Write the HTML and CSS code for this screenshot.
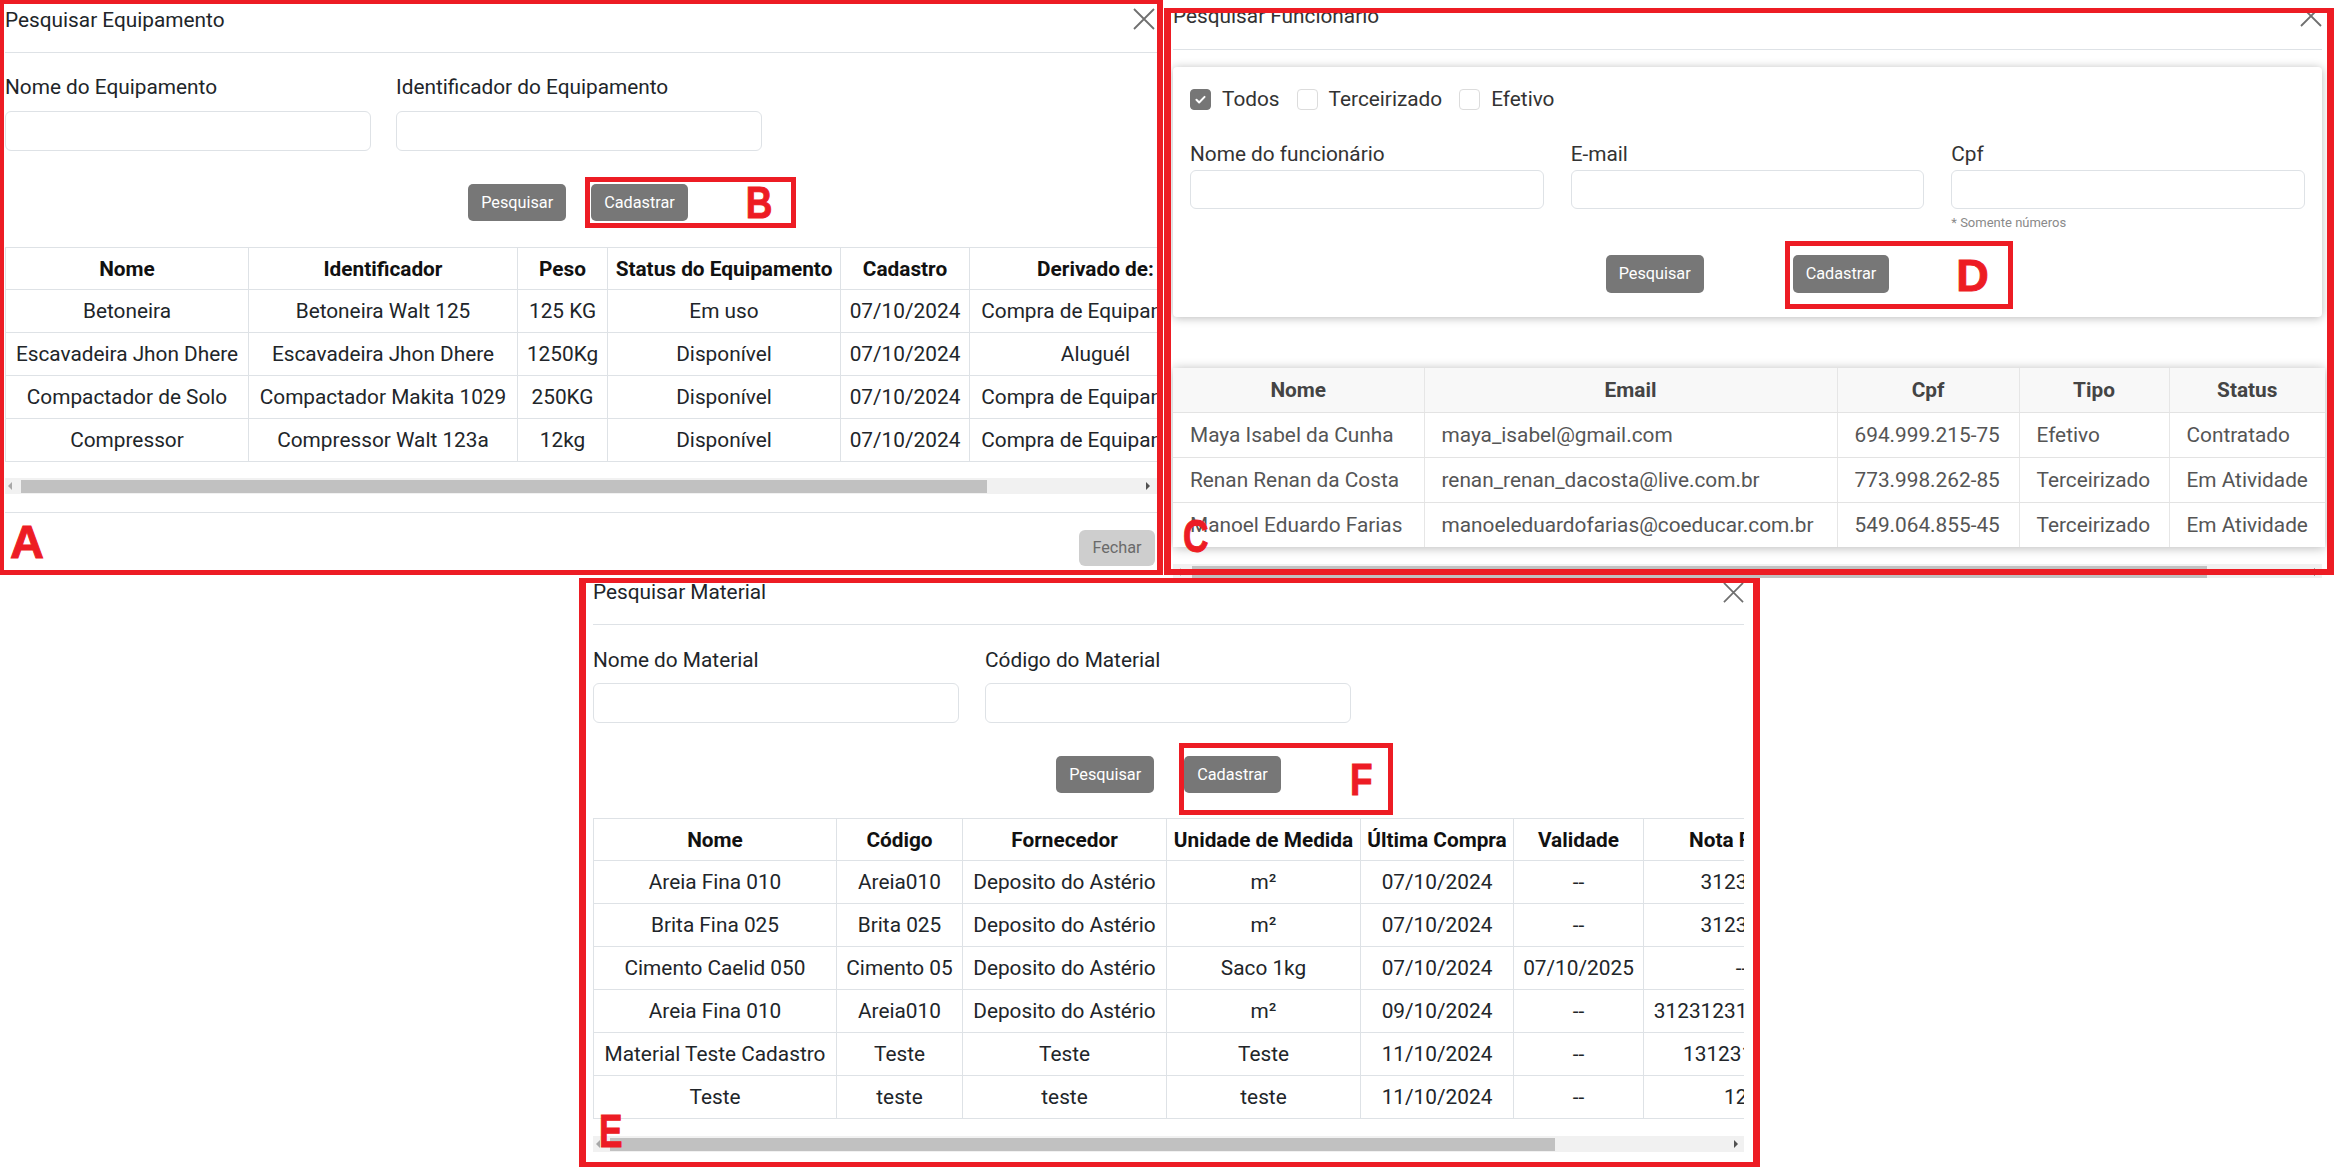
FILE: index.html
```html
<!DOCTYPE html>
<html lang="pt-BR">
<head>
<meta charset="utf-8">
<title>Pesquisas</title>
<link rel="stylesheet" href="styles.css">
</head>
<body>
<div class="collage">
  <div class="row-top">
    <section class="panel panel-a">
      <div class="modal modal-a">
        <header class="m-head m-head-a">
          <h1 class="m-title">Pesquisar Equipamento</h1>
          <svg class="x" viewBox="0 0 22 22"><path d="M1 1L21 21M21 1L1 21"/></svg>
        </header>
        <div class="fields fields-a">
          <div class="field"><label>Nome do Equipamento</label><div class="input"></div></div>
          <div class="field"><label>Identificador do Equipamento</label><div class="input"></div></div>
        </div>
        <div class="actions actions-a">
          <button class="btn">Pesquisar</button>
          <span class="mark"><button class="btn">Cadastrar</button><span class="mark-box mark-b"><span class="mark-letter narrow">B</span></span></span>
        </div>
        <div class="tbl-wrap tbl-wrap-a">
          <table class="tbl tbl-a">
            <colgroup><col class="a1"><col class="a2"><col class="a3"><col class="a4"><col class="a5"><col class="a6"></colgroup>
            <thead><tr><th>Nome</th><th>Identificador</th><th>Peso</th><th>Status do Equipamento</th><th>Cadastro</th><th>Derivado de:</th></tr></thead>
            <tbody>
              <tr><td>Betoneira</td><td>Betoneira Walt 125</td><td>125 KG</td><td>Em uso</td><td>07/10/2024</td><td>Compra de Equipamento</td></tr>
              <tr><td>Escavadeira Jhon Dhere</td><td>Escavadeira Jhon Dhere</td><td>1250Kg</td><td>Disponível</td><td>07/10/2024</td><td>Aluguél</td></tr>
              <tr><td>Compactador de Solo</td><td>Compactador Makita 1029</td><td>250KG</td><td>Disponível</td><td>07/10/2024</td><td>Compra de Equipamento</td></tr>
              <tr><td>Compressor</td><td>Compressor Walt 123a</td><td>12kg</td><td>Disponível</td><td>07/10/2024</td><td>Compra de Equipamento</td></tr>
            </tbody>
          </table>
        </div>
        <div class="hscroll hscroll-a"><span class="arr arr-l"></span><span class="thumb"></span><span class="arr arr-r"></span></div>
        <footer class="m-foot"><button class="btn btn-light">Fechar</button></footer>
      </div>
      <span class="tag tag-a">A</span>
    </section>

    <section class="panel panel-c">
      <div class="modal modal-c">
        <header class="m-head m-head-c">
          <h1 class="m-title">Pesquisar Funcionário</h1>
          <svg class="x" viewBox="0 0 22 22"><path d="M1 1L21 21M21 1L1 21"/></svg>
        </header>
        <div class="card filter-card">
          <div class="checks">
            <span class="check-item"><span class="chk chk-on"><svg viewBox="0 0 21 21"><path d="M6 10.8l3 3 6-6.2"/></svg></span>Todos</span>
            <span class="check-item"><span class="chk"></span>Terceirizado</span>
            <span class="check-item"><span class="chk"></span>Efetivo</span>
          </div>
          <div class="fields fields-c">
            <div class="field"><label>Nome do funcionário</label><div class="input"></div></div>
            <div class="field"><label>E-mail</label><div class="input"></div></div>
            <div class="field"><label>Cpf</label><div class="input"></div><p class="hint">* Somente números</p></div>
          </div>
          <div class="actions actions-c">
            <button class="btn">Pesquisar</button>
            <span class="mark"><button class="btn">Cadastrar</button><span class="mark-box mark-d"><span class="mark-letter">D</span></span></span>
          </div>
        </div>
        <div class="card table-card">
          <table class="tbl-c">
            <colgroup><col class="c1"><col class="c2"><col class="c3"><col class="c4"><col class="c5"></colgroup>
            <thead><tr><th>Nome</th><th>Email</th><th>Cpf</th><th>Tipo</th><th>Status</th></tr></thead>
            <tbody>
              <tr><td>Maya Isabel da Cunha</td><td>maya_isabel@gmail.com</td><td>694.999.215-75</td><td>Efetivo</td><td>Contratado</td></tr>
              <tr><td>Renan Renan da Costa</td><td>renan_renan_dacosta@live.com.br</td><td>773.998.262-85</td><td>Terceirizado</td><td>Em Atividade</td></tr>
              <tr><td>Manoel Eduardo Farias</td><td>manoeleduardofarias@coeducar.com.br</td><td>549.064.855-45</td><td>Terceirizado</td><td>Em Atividade</td></tr>
            </tbody>
          </table>
        </div>
        <div class="hscroll hscroll-c"><span class="arr arr-l"></span><span class="thumb"></span><span class="arr arr-r"></span></div>
      </div>
      <span class="tag tag-c narrow">C</span>
    </section>
  </div>

  <div class="row-bottom">
    <section class="panel panel-e">
      <div class="modal modal-e">
        <header class="m-head m-head-e">
          <h1 class="m-title">Pesquisar Material</h1>
          <svg class="x" viewBox="0 0 22 22"><path d="M1 1L21 21M21 1L1 21"/></svg>
        </header>
        <div class="fields fields-e">
          <div class="field"><label>Nome do Material</label><div class="input"></div></div>
          <div class="field"><label>Código do Material</label><div class="input"></div></div>
        </div>
        <div class="actions actions-e">
          <button class="btn">Pesquisar</button>
          <span class="mark"><button class="btn">Cadastrar</button><span class="mark-box mark-f"><span class="mark-letter narrow">F</span></span></span>
        </div>
        <div class="tbl-wrap tbl-wrap-e">
          <table class="tbl tbl-e">
            <colgroup><col class="e1"><col class="e2"><col class="e3"><col class="e4"><col class="e5"><col class="e6"><col class="e7"></colgroup>
            <thead><tr><th>Nome</th><th>Código</th><th>Fornecedor</th><th>Unidade de Medida</th><th>Última Compra</th><th>Validade</th><th>Nota Fiscal</th></tr></thead>
            <tbody>
              <tr><td>Areia Fina 010</td><td>Areia010</td><td>Deposito do Astério</td><td>m²</td><td>07/10/2024</td><td>--</td><td>3123123</td></tr>
              <tr><td>Brita Fina 025</td><td>Brita 025</td><td>Deposito do Astério</td><td>m²</td><td>07/10/2024</td><td>--</td><td>3123123</td></tr>
              <tr><td>Cimento Caelid 050</td><td>Cimento 05</td><td>Deposito do Astério</td><td>Saco 1kg</td><td>07/10/2024</td><td>07/10/2025</td><td>--</td></tr>
              <tr><td>Areia Fina 010</td><td>Areia010</td><td>Deposito do Astério</td><td>m²</td><td>09/10/2024</td><td>--</td><td>312312312312312</td></tr>
              <tr><td>Material Teste Cadastro</td><td>Teste</td><td>Teste</td><td>Teste</td><td>11/10/2024</td><td>--</td><td>1312312312</td></tr>
              <tr><td>Teste</td><td>teste</td><td>teste</td><td>teste</td><td>11/10/2024</td><td>--</td><td>123</td></tr>
            </tbody>
          </table>
        </div>
        <div class="hscroll hscroll-e"><span class="arr arr-l"></span><span class="thumb"></span><span class="arr arr-r"></span></div>
      </div>
      <span class="tag tag-e narrow">E</span>
    </section>
  </div>
</div>
</body>
</html>
```

FILE: styles.css
```css
* { box-sizing: border-box; }
html, body { margin: 0; padding: 0; background: #fff; }
body {
  font-family: Roboto, "Liberation Sans", Arial, sans-serif;
  font-size: 20.8px;
  color: #212529;
  width: 2335px;
  height: 1169px;
  overflow: hidden;
}

.row-top { display: flex; height: 578px; }
.row-bottom { padding-left: 579px; }

.panel { position: relative; overflow: hidden; background: #fff; flex: none; }
.panel::after {
  content: "";
  position: absolute;
  inset: 0;
  border-style: solid;
  border-color: #ed1c24;
  pointer-events: none;
  z-index: 10;
}
.panel-a { width: 1163px; height: 575px; }
.panel-a::after { border-width: 4px 6px 5px 4px; }
.panel-c { width: 1170px; height: 570px; margin: 8px 0 0 1px; background: transparent; }
.panel-c::after { bottom: 3px; border-width: 5px 7px 6px 7px; }
.panel-e { width: 1181px; height: 589px; }
.panel-e::after { border-width: 5px 7px 5px 7px; }

/* modal basics */
.m-head {
  display: flex;
  justify-content: space-between;
  align-items: flex-start;
  border-bottom: 1px solid #dee2e6;
}
.m-title { margin: 0; font-size: 20.8px; font-weight: 400; line-height: 24px; color: #212529; }
.x { width: 22px; height: 22px; flex: none; }
.x path { stroke: #6f6f6f; stroke-width: 1.8; fill: none; }

.field label { display: block; line-height: 24px; white-space: nowrap; }
.input { border: 1px solid #dee2e6; border-radius: 6px; background: #fff; }

.actions { display: flex; justify-content: center; align-items: flex-start; }
.btn {
  height: 37px;
  padding: 0 13px;
  border: 0;
  border-radius: 5px;
  background: #777;
  color: #fff;
  font-family: Roboto, "Liberation Sans", Arial, sans-serif;
  font-size: 16.25px;
  line-height: 37px;
}
.btn-light { background: #cecece; color: #6a6a6a; height: 36px; width: 76px; padding: 0; border-radius: 6px; line-height: 36px; }

/* annotation marks */
.mark { position: relative; display: inline-block; }
.mark-box {
  position: absolute;
  border: 5px solid #ed1c24;
  display: flex;
  align-items: center;
  justify-content: flex-end;
  z-index: 5;
}
.mark-letter, .tag {
  font-family: "Liberation Sans", Arial, sans-serif;
  font-weight: 700;
  color: #ed1c24;
  line-height: 1;
  -webkit-text-stroke: 1px #ed1c24;
}
.mark-letter { font-size: 45px; display: inline-block; }
.mark-letter.narrow { transform: scaleX(0.82); transform-origin: right center; }
.mark-b { left: -6px; top: -7px; width: 211px; height: 51px; padding-right: 19px; }
.mark-d { left: -8px; top: -14px; width: 228px; height: 68px; padding-right: 19px; }
.mark-f { left: -5px; top: -13px; width: 214px; height: 72px; padding-right: 16px; }

.tag { position: absolute; font-size: 47px; z-index: 11; }
.tag.narrow { transform: scaleX(0.75); transform-origin: left center; }
.tag-a { left: 10px; top: 518px; }
.tag-c { left: 19px; top: 504px; }
.tag-e { left: 20px; top: 529px; }

/* bordered tables (A, E) */
.tbl-wrap { overflow: hidden; }
.tbl { border-collapse: collapse; table-layout: fixed; }
.tbl th, .tbl td {
  border: 1px solid #dee2e6;
  padding: 0 4px;
  text-align: center;
  white-space: nowrap;
  overflow: hidden;
}
.tbl th { font-weight: 700; color: #111; }
.tbl tr { height: 43px; }
.tbl thead tr { height: 42px; }

/* fake horizontal scrollbar */
.hscroll { display: flex; align-items: center; height: 16px; background: #f1f1f1; }
.thumb { height: 13px; background: #c1c1c1; flex: none; }
.arr { width: 0; height: 0; border-top: 4px solid transparent; border-bottom: 4px solid transparent; flex: none; }
.arr-l { border-right: 4px solid #a8a8a8; }
.arr-r { border-left: 4px solid #505050; margin-left: auto; }

/* ---------- Panel A ---------- */
.modal-a { padding: 0 6px 0 5px; }
.m-head-a { height: 53px; }
.m-head-a .m-title { margin-top: 8px; }
.m-head-a .x { margin: 8px 2px 0 0; }
.fields { display: flex; }
.fields-a { margin-top: 22px; gap: 25px; }
.fields-a .field { width: 366px; }
.fields-a .input { margin-top: 12px; height: 40px; }
.actions-a { margin-top: 33px; gap: 25px; padding-right: 6px; }
.tbl-wrap-a { margin-top: 26px; }
.tbl-a { width: 1216px; }
.a1 { width: 243px; } .a2 { width: 269px; } .a3 { width: 90px; }
.a4 { width: 233px; } .a5 { width: 129px; } .a6 { width: 252px; }
.hscroll-a { margin-top: 16px; padding: 0 7px 0 3px; }
.hscroll-a .thumb { margin-left: 9px; width: 966px; }
.m-foot { margin-top: 18px; border-top: 1px solid #dee2e6; padding: 17px 2px 0 0; display: flex; justify-content: flex-end; }

/* ---------- Panel C ---------- */
.modal-c { padding: 0 12px 0 9px; color: #333; background: #fff; height: 570px; }
.m-head-c { height: 42px; }
.m-head-c .m-title { margin-top: -4px; color: #333; }
.m-head-c .x { margin-top: -3px; }
.card { background: #fff; border-radius: 4px; box-shadow: 0 1px 10px rgba(0, 0, 0, 0.28); }
.filter-card { margin-top: 17px; height: 250px; padding: 20px 17px 0; }
.checks { display: flex; align-items: center; height: 24px; }
.check-item { display: flex; align-items: center; margin-right: 17px; color: #333; }
.chk { width: 21px; height: 21px; border: 1px solid #dcdcdc; border-radius: 4px; margin-right: 11px; display: flex; }
.chk-on { background: #767676; border-color: #767676; }
.chk svg { width: 19px; height: 19px; }
.chk svg path { fill: none; stroke: #fff; stroke-width: 2.2; stroke-linecap: round; stroke-linejoin: round; }
.fields-c { margin-top: 31px; display: grid; grid-template-columns: repeat(3, 1fr); gap: 27px; }
.fields-c label { color: #333; }
.fields-c .input { margin-top: 4px; height: 39px; }
.hint { margin: 5px 0 0; font-size: 13px; line-height: 18px; color: #8a8a8a; }
.actions-c { margin-top: 23px; gap: 89px; }
.actions-c .btn { height: 38px; line-height: 38px; }
.table-card { margin-top: 51px; width: 1152px; border-radius: 0; overflow: hidden; }
.tbl-c { border-collapse: collapse; table-layout: fixed; width: 1152px; }
.c1 { width: 251px; } .c2 { width: 413px; } .c3 { width: 182px; } .c4 { width: 150px; } .c5 { width: 156px; }
.tbl-c th, .tbl-c td { white-space: nowrap; overflow: hidden; border-left: 1px solid #e6e6e6; border-bottom: 1px solid #e3e3e3; }
.tbl-c th:first-child, .tbl-c td:first-child { border-left: 0; }
.tbl-c tbody tr:last-child td { border-bottom: 0; }
.tbl-c th { height: 44px; background: #f8f8f8; color: #444; font-weight: 700; text-align: center; }
.tbl-c td { height: 45px; color: #555; text-align: left; padding: 0 0 0 17px; }
.hscroll-c { margin-top: 17px; padding: 0 4px 0 4px; }
.hscroll-c .thumb { margin-left: 11px; width: 1015px; }

/* ---------- Panel E ---------- */
.modal-e { padding: 0 16px 0 14px; }
.m-head-e { height: 47px; }
.m-head-e .m-title { margin-top: 2px; }
.m-head-e .x { margin-top: 4px; width: 21px; height: 21px; }
.fields-e { margin-top: 23px; gap: 26px; }
.fields-e .field { width: 366px; }
.fields-e .input { margin-top: 11px; height: 40px; }
.actions-e { margin-top: 33px; gap: 30px; }
.tbl-wrap-e { margin-top: 25px; }
.tbl-e { width: 1246px; }
.e1 { width: 243px; } .e2 { width: 126px; } .e3 { width: 204px; } .e4 { width: 194px; }
.e5 { width: 153px; } .e6 { width: 130px; } .e7 { width: 196px; }
.hscroll-e { margin-top: 17px; padding: 0 6px 0 3px; }
.hscroll-e .thumb { margin-left: 10px; width: 945px; }
```
